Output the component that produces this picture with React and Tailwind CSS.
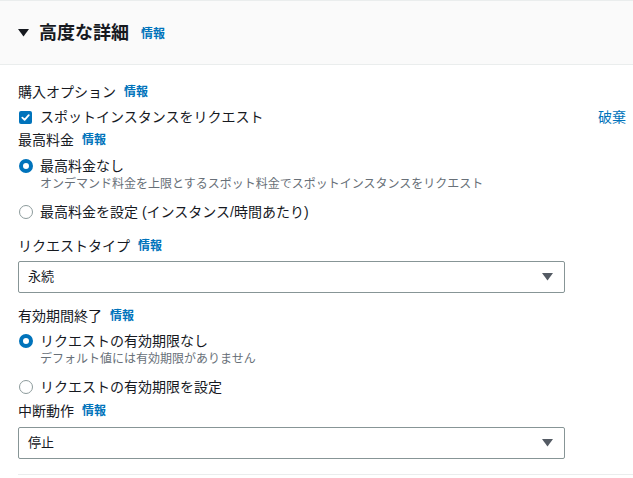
import React from 'react';

const Info = () => (
  <span className="ml-2 text-[12px] font-bold text-[#0073bb] leading-[20px]">情報</span>
);

const Label = ({ children, className = '' }) => (
  <div className={`flex items-center text-[14px] leading-[20px] text-[#16191f] ${className}`}>
    <span>{children}</span>
    <Info />
  </div>
);

const Radio = ({ checked, label, description, className = '' }) => (
  <div className={className}>
    <div className="flex items-center h-[20px]">
      {checked ? (
        <span className="w-[14px] h-[14px] rounded-full border-[4px] border-[#0073bb] bg-white ml-[1px]" />
      ) : (
        <span className="w-[14px] h-[14px] rounded-full border-[1.5px] border-[#8d9b9c] bg-white ml-[1px]" />
      )}
      <span className="ml-[7px] text-[14px] leading-[20px] text-[#16191f]">{label}</span>
    </div>
    {description && (
      <div className="pl-[22px] text-[12px] leading-[16px] text-[#687078]">{description}</div>
    )}
  </div>
);

const Select = ({ value, className = '' }) => (
  <div className={`w-[547px] h-[32px] border border-[#879596] rounded-[2px] bg-white flex items-center justify-between pl-[9px] pr-[11px] ${className}`}>
    <span className="text-[13px] text-[#16191f]">{value}</span>
    <svg width="11" height="8" viewBox="0 0 11 8">
      <path d="M0 0 L11 0 L5.5 7.5 Z" fill="#545b64" />
    </svg>
  </div>
);

export default function App() {
  return (
    <div
      className="w-[633px] h-[478px] bg-white overflow-hidden"
      style={{ fontFamily: '"Liberation Sans", "Noto Sans CJK JP", sans-serif' }}
    >
      {/* Header */}
      <div className="h-[65px] border-t border-b border-[#eaeded] bg-[#fafafa] flex items-center pl-[18px]">
        <svg width="11" height="8" viewBox="0 0 11 8" className="mt-[1px]">
          <path d="M0 0 L11 0 L5.5 7.5 Z" fill="#16191f" />
        </svg>
        <span className="ml-[10px] text-[18px] font-bold text-[#16191f] leading-[24px]">高度な詳細</span>
        <span className="ml-[12px] text-[12px] font-bold text-[#0073bb] mt-[2px]">情報</span>
      </div>

      {/* Body */}
      <div className="pl-[18px] pt-[17px]">
        <Label>購入オプション</Label>

        <div className="mt-[5px] flex items-center h-[20px] pr-[7px]">
          <span className="w-[13px] h-[13px] rounded-[2px] bg-[#0073bb] flex items-center justify-center ml-[1px]">
            <svg width="9" height="9" viewBox="0 0 10 10">
              <path d="M1.5 5.2 L4 7.6 L8.6 2.4" fill="none" stroke="#fff" strokeWidth="2" strokeLinecap="round" strokeLinejoin="round" />
            </svg>
          </span>
          <span className="ml-[8px] text-[14px] leading-[20px] text-[#16191f]">スポットインスタンスをリクエスト</span>
          <span className="ml-auto text-[14px] text-[#0073bb]">破棄</span>
        </div>

        <Label className="mt-[3px]">最高料金</Label>
        <Radio
          className="mt-[6px]"
          checked
          label="最高料金なし"
          description="オンデマンド料金を上限とするスポット料金でスポットインスタンスをリクエスト"
        />
        <Radio className="mt-[10px]" label="最高料金を設定 (インスタンス/時間あたり)" />

        <Label className="mt-[14px]">リクエストタイプ</Label>
        <Select className="mt-[5px]" value="永続" />

        <Label className="mt-[13px]">有効期間終了</Label>
        <Radio
          className="mt-[5px]"
          checked
          label="リクエストの有効期限なし"
          description="デフォルト値には有効期限がありません"
        />
        <Radio className="mt-[10px]" label="リクエストの有効期限を設定" />

        <Label className="mt-[4px]">中断動作</Label>
        <Select className="mt-[6px]" value="停止" />

        <div className="mt-[15px] border-t border-[#eaeded]" />
      </div>
    </div>
  );
}
